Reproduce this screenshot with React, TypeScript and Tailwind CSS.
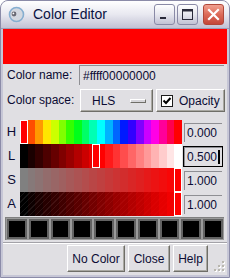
import React from 'react';

// HLS -> rgb string, h in degrees, l and s in 0..1
const hls = (h: number, l: number, s: number) => {
  const q = l <= 0.5 ? l * (1 + s) : l + s - l * s;
  const p = 2 * l - q;
  const f = (t: number) => {
    let x = t;
    if (x < 0) x += 360;
    if (x > 360) x -= 360;
    if (x < 60) return p + ((q - p) * x) / 60;
    if (x < 180) return q;
    if (x < 240) return p + ((q - p) * (240 - x)) / 60;
    return p;
  };
  const c = (v: number) => Math.round(v * 255);
  return `rgb(${c(f(h + 120))},${c(f(h))},${c(f(h - 120))})`;
};

const steps = Array.from({ length: 21 }, (_, i) => i);

const rows = [
  { label: 'H', value: '0.000', marker: 0, colors: steps.map((i) => hls(i * 18, 0.5, 1)) },
  { label: 'L', value: '0.500', marker: 72, colors: steps.map((i) => hls(0, i / 20, 1)), focus: true },
  { label: 'S', value: '1.000', marker: 154, colors: steps.map((i) => hls(0, 0.5, i / 20)) },
  { label: 'A', value: '1.000', marker: 154, colors: steps.map((i) => `rgba(255,0,0,${i / 20})`), alpha: true },
];

const TitleButton = ({ kind }: { kind: 'min' | 'max' | 'close' }) => {
  if (kind === 'close') {
    return (
      <div className="w-[21px] h-[21px] rounded-[3px] border border-[#b0483a] bg-gradient-to-b from-[#f0a090] via-[#dc6a58] to-[#c4473a] flex items-center justify-center">
        <svg width="13" height="13" viewBox="0 0 13 13">
          <path d="M2 2 L11 11 M11 2 L2 11" stroke="white" strokeWidth="2.2" strokeLinecap="square" />
        </svg>
      </div>
    );
  }
  return (
    <div className="w-[21px] h-[21px] rounded-[3px] border border-[#8a8aa6] bg-gradient-to-b from-white via-[#e6e6ee] to-[#c2c2d4] flex items-center justify-center">
      {kind === 'min' ? (
        <svg width="13" height="13" viewBox="0 0 13 13">
          <rect x="2" y="9" width="6" height="2" fill="#2a2a3a" />
        </svg>
      ) : (
        <svg width="13" height="13" viewBox="0 0 13 13">
          <rect x="1.5" y="1.5" width="10" height="10" fill="none" stroke="#2a2a3a" strokeWidth="1" />
          <rect x="1.5" y="1.5" width="10" height="2" fill="#2a2a3a" />
        </svg>
      )}
    </div>
  );
};

const Entry = ({ value, focus }: { value: string; focus?: boolean }) => (
  <div className={`h-[21px] w-[40px] ${focus ? 'border border-black' : 'border border-transparent'}`}>
    <div className="h-full border-t border-l border-[#8f8f94] border-b-white border-r-white bg-[#e0dfe3] flex items-center pl-[2px] text-[12px] text-[#0b0b33] leading-none">
      {value}
      {focus && <span className="w-[2px] h-[14px] bg-black ml-[1px]" />}
    </div>
  </div>
);

const Button = ({ children, w }: { children: React.ReactNode; w: string }) => (
  <div className={`${w} h-[27px] border border-t-white border-l-white border-r-[#6f6e68] border-b-[#6f6e68] shadow-[inset_-1px_-1px_0_#a9a8a2] flex items-center justify-center text-[12px] text-[#0b0b33]`}>
    {children}
  </div>
);

export default function App() {
  return (
    <div className="w-[230px] h-[278px] bg-white font-['Liberation_Sans',Arial,sans-serif]">
      <div className="w-[230px] h-[278px] border border-[#8b8ba8] rounded-t-[8px] bg-[#c6c6d6] flex flex-col overflow-hidden">
        {/* Title bar */}
        <div className="h-[28px] flex items-center bg-gradient-to-b from-white via-[#e8e8f0] to-[#c2c2d4] border-b border-[#9c9cb4]">
          <div className="ml-[7px] w-[17px] h-[17px]">
            <svg width="17" height="17" viewBox="0 0 17 17">
              <circle cx="8.5" cy="8.5" r="7" fill="#d4d8e0" stroke="#86aed0" strokeWidth="1.6" />
              <circle cx="6" cy="8" r="2.4" fill="#6a6a74" />
              <circle cx="5.4" cy="7.4" r="0.9" fill="#ffffff" />
            </svg>
          </div>
          <span className="ml-[8px] text-[14px] text-[#0a1242]">Color Editor</span>
          <div className="ml-auto mr-[5px] flex items-center gap-[2px]">
            <TitleButton kind="min" />
            <TitleButton kind="max" />
            <div className="w-[1px]" />
            <TitleButton kind="close" />
          </div>
        </div>

        {/* Client area */}
        <div className="mx-[2px] mb-[2px] flex-1 bg-[#e0dfe3] flex flex-col text-[12px] text-[#0b0b33] relative">
          <div className="h-[35px] bg-[#ff0000]" />

          <div className="h-[24px] flex items-start">
            <div className="mt-[1px] w-[76px] pl-[4px] h-[20px] leading-[20px]">Color name:</div>
            <div className="mt-[1px] w-[145px] h-[20px] border-t border-l border-[#8f8f94] border-b-white border-r-white flex items-center pl-[3px]">
              #ffff00000000
            </div>
          </div>

          <div className="h-[25px] flex items-start">
            <div className="mt-[1px] w-[77px] pl-[4px] h-[23px] leading-[23px]">Color space:</div>
            <div className="mt-[1px] w-[73px] h-[23px] border border-t-white border-l-white border-r-[#6f6e68] border-b-[#6f6e68] shadow-[inset_-1px_-1px_0_#a9a8a2] flex items-center pl-[11px]">
              <span>HLS</span>
              <div className="ml-auto mr-[6px] w-[16px] h-[4px] border border-t-white border-l-white border-r-[#6f6e68] border-b-[#6f6e68] bg-[#d6d5d9]" />
            </div>
            <div className="mt-[1px] ml-[3px] w-[69px] h-[23px] border border-t-white border-l-white border-r-[#6f6e68] border-b-[#6f6e68] shadow-[inset_-1px_-1px_0_#a9a8a2] flex items-center pl-[4px]">
              <div className="w-[12px] h-[12px] border border-[#1c1c1c] bg-white flex items-center justify-center">
                <svg width="10" height="10" viewBox="0 0 10 10">
                  <path d="M1.5 4.5 L4 7 L8.5 2" stroke="black" strokeWidth="2" fill="none" />
                </svg>
              </div>
              <span className="ml-[6px]">Opacity</span>
            </div>
          </div>

          <div className="h-[7px]" />

          {rows.map((r) => (
            <div key={r.label} className="h-[24px] flex items-center">
              <div className="w-[17px] text-center text-[13px]">{r.label}</div>
              <div
                className={`w-[162px] h-[24px] relative flex ${
                  r.alpha
                    ? 'bg-black bg-[repeating-linear-gradient(135deg,#000_0px,#000_3px,#161616_3px,#161616_4px)]'
                    : ''
                }`}
              >
                {r.colors.map((c, i) => (
                  <div key={i} className="flex-1 h-full" style={{ background: c }} />
                ))}
                <div
                  className="absolute top-0 h-full w-[8px] border border-white bg-[#ff0000]"
                  style={{ left: r.marker }}
                />
              </div>
              <div className="ml-[1px]">
                <Entry value={r.value} focus={r.focus} />
              </div>
            </div>
          ))}

          <div className="h-[1px]" />

          <div className="ml-[2px] w-[219px] h-[23px] border-t border-l border-[#808080] border-b-white border-r-white bg-[#9a9a9a] grid grid-cols-10 gap-[2px] p-[1px]">
            {Array.from({ length: 10 }, (_, i) => (
              <div key={i} className="border-2 border-[#626262] bg-black" />
            ))}
          </div>

          <div className="h-[2px]" />

          <div className="flex-1 border-t border-[#a3a2a8] shadow-[inset_0_1px_0_#ffffff] flex justify-end items-start pt-[2px] pr-[19px] gap-[3px]">
            <Button w="w-[58px]">No Color</Button>
            <Button w="w-[42px]">Close</Button>
            <Button w="w-[35px]">Help</Button>
          </div>

          <svg className="absolute right-[2px] bottom-[3px]" width="11" height="11" viewBox="0 0 11 11">
            {[
              [8, 0], [8, 4], [4, 4], [8, 8], [4, 8], [0, 8],
            ].map(([x, y], i) => (
              <g key={i}>
                <rect x={x + 1} y={y + 1} width="2" height="2" fill="#ffffff" />
                <rect x={x} y={y} width="2" height="2" fill="#b8b6ae" />
              </g>
            ))}
          </svg>
        </div>
      </div>
    </div>
  );
}
